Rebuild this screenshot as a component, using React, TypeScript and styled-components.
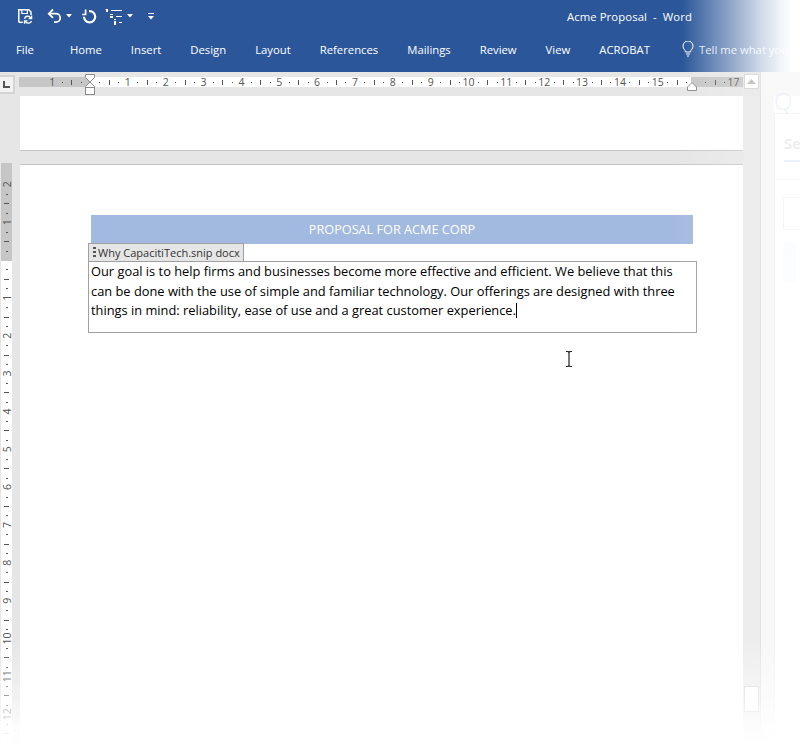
import React from "react";
import styled, { createGlobalStyle } from "styled-components";

const Global = createGlobalStyle`
  html, body { margin: 0; padding: 0; background: #fff; }
  body { font-family: "Open Sans", "Noto Sans", "Liberation Sans", sans-serif; }
  #root { width: 800px; height: 750px; overflow: hidden; }
`;

const Frame = styled.div`
  position: relative;
  width: 800px;
  height: 750px;
  overflow: hidden;
  display: flex;
  flex-direction: column;
`;
const Ribbon = styled.header`
  position: relative;
  background: #2b579a;
  color: #fff;
  height: 72px;
  flex: none;
  display: flex;
  flex-direction: column;
  &::after {
    content: "";
    position: absolute;
    inset: 0;
    background: linear-gradient(to right, rgba(255,255,255,0) 682px, rgba(255,255,255,0.37) 720px, rgba(255,255,255,0.57) 740px, rgba(255,255,255,0.77) 760px, rgba(255,255,255,0.93) 780px, #fff 792px);
  }
`;
const TitleRow = styled.div`
  height: 32px;
  display: flex;
  align-items: center;
  justify-content: space-between;
  padding: 0 108px 0 17px;
`;
const Qat = styled.div`
  display: flex;
  align-items: center;
`;
const QatIcon = styled.svg<{ $ml?: number }>`
  display: block;
  flex: none;
  margin-left: ${(p) => p.$ml ?? 0}px;
`;
const DocTitle = styled.div`
  font-size: 11.3px;
  white-space: pre;
  letter-spacing: 0.1px;
`;
const TabRow = styled.nav`
  height: 36px;
  display: flex;
  align-items: center;
  padding-left: 16px;
  font-size: 11.3px;
  white-space: nowrap;
  padding-bottom: 2px;
  box-sizing: border-box;
`;
const FileTab = styled.span`
  margin-right: 36px;
`;
const Tab = styled.span`
  margin-right: 29px;
`;
const TellMe = styled.span`
  display: flex;
  align-items: center;
  gap: 5px;
  margin-left: 3px;
  color: #dfe6f2;
`;
const RulerRow = styled.div`
  height: 24px;
  flex: none;
  background: #e6e6e6;
  display: flex;
  align-items: flex-start;
`;
const TabSelector = styled.div`
  flex: none;
  width: 13px;
  height: 15px;
  margin: 3px 4px 0 0;
  background: #f3f3f3;
  border: 2px solid #d4d4d4;
  border-left: none;
  display: flex;
  align-items: center;
  justify-content: center;
`;
const HRuler = styled.svg`
  flex: none;
  display: block;
`;
const ScrollUp = styled.div`
  flex: none;
  width: 15px;
  height: 15px;
  box-sizing: border-box;
  margin: 2px 0 0 1px;
  background: #fff;
  border: 1px solid #d2d2d2;
  display: flex;
  align-items: center;
  justify-content: center;
`;
const RulerEnd = styled.div`
  flex: 1;
  align-self: stretch;
  margin-left: 1px;
  background: #f7f7f7;
  border-left: 1px solid #dcdcdc;
`;
const Body = styled.div`
  flex: 1;
  min-height: 0;
  display: flex;
`;
const LeftGutter = styled.div`
  flex: none;
  width: 20px;
  background: #e6e6e6;
`;
const VRuler = styled.svg`
  display: block;
`;
const DocArea = styled.main`
  flex: none;
  width: 723px;
  display: flex;
  flex-direction: column;
`;
const PageTail = styled.div`
  height: 54px;
  flex: none;
  background: #fff;
`;
const PageGap = styled.div`
  height: 13px;
  flex: none;
  background: #e6e6e6;
  border-top: 1px solid #c6c6c6;
  border-bottom: 1px solid #c6c6c6;
`;
const Page = styled.section`
  flex: 1;
  background: #fff;
  padding: 50px 0 0 68px;
`;
const HeaderBand = styled.div`
  width: 602px;
  height: 29px;
  box-sizing: border-box;
  padding-bottom: 2px;
  margin-left: 3px;
  background: #a2b9e0;
  color: #fff;
  font-size: 12.7px;
  display: flex;
  align-items: center;
  justify-content: center;
`;
const ControlTag = styled.div`
  width: 154px;
  height: 17px;
  margin-top: -1px;
  background: #e6e6e6;
  border: 1px solid #a0a0a0;
  border-bottom: none;
  display: flex;
  align-items: center;
  font-size: 11px;
  color: #333;
  white-space: nowrap;
  overflow: hidden;
`;
const Grip = styled.svg`
  flex: none;
  margin: 0 1px 0 3px;
`;
const ControlBox = styled.div`
  width: 605px;
  height: 70px;
  border: 1px solid #a0a0a0;
  padding-left: 2px;
  font-size: 12.85px;
  line-height: 19.5px;
  color: #000;
`;
const Caret = styled.span`
  display: inline-block;
  width: 1px;
  height: 15px;
  background: #000;
  vertical-align: -3px;
`;
const Scrollbar = styled.aside`
  flex: none;
  width: 18px;
  background: #e9e9e9;
  border-right: 1px solid #dcdcdc;
  display: flex;
  flex-direction: column;
  justify-content: flex-end;
  padding-bottom: 38px;
  box-sizing: border-box;
`;
const Thumb = styled.div`
  width: 13px;
  height: 24px;
  margin-left: 1px;
  background: #fff;
  border: 1px solid #cfcfcf;
`;
const Spacer = styled.div`
  flex: none;
  width: 13px;
  background: #f6f6f6;
`;
const SidePane = styled.div`
  flex: 1;
  background: #fff;
  white-space: nowrap;
  display: flex;
  flex-direction: column;
`;
const PaneTitle = styled.div`
  font-size: 24px;
  font-weight: 300;
  color: #e6edf8;
  line-height: 9px;
  height: 17px;
`;
const PaneCard = styled.div`
  flex: 1;
  border-left: 1px solid #f0f0f0;
  border-top: 1px solid #f2f2f2;
`;
const PaneTab = styled.div`
  margin: 19px 0 0 9px;
  height: 29px;
  width: 16px;
  font-size: 15px;
  line-height: 20px;
  font-weight: 600;
  color: #e6e6e6;
  border-bottom: 2px solid #e2ebf7;
  box-sizing: border-box;
`;
const PaneRule = styled.div`
  height: 1px;
  margin-top: 17px;
  background: #f5f5f5;
`;
const PaneField = styled.div`
  margin: 17px 0 0 8px;
  height: 31px;
  border: 1px solid #f3f3f3;
  border-right: none;
`;
const PaneBlock = styled.div`
  margin: 12px 4px 0 8px;
  height: 40px;
  background: #fbfcfe;
`;
const Fade = styled.div`
  position: absolute;
  inset: 72px 0 0 0;
  pointer-events: none;
  background:
    linear-gradient(to right, rgba(255,255,255,0) 670px, rgba(255,255,255,0.18) 740px, rgba(255,255,255,0.25) 800px),
    linear-gradient(to bottom, rgba(255,255,255,0) 568px, rgba(255,255,255,0.5) 628px, rgba(255,255,255,0.9) 658px, #fff 673px);
`;
const IBeam = styled.svg`
  position: absolute;
  left: 565px;
  top: 351px;
`;

const U = 37.85;
const X0 = 71; // ruler-local x of zero (page x 90)

function TopRuler() {
  const marks: React.ReactNode[] = [];
  for (let n = -1; n <= 17; n++) {
    const x = X0 + n * U;
    if (n !== 0 && n !== 16) {
      marks.push(
        <text key={"t" + n} x={x} y={14} fontSize="10.5" textAnchor="middle" fill="#555" fontFamily="'Open Sans', sans-serif">
          {Math.abs(n)}
        </text>
      );
    }
    for (const q of [0.25, 0.5, 0.75]) {
      const px = x + q * U;
      if (px > 724 || px < 0) continue;
      marks.push(
        q === 0.5 ? (
          <rect key={`m${n}${q}`} x={Math.round(px)} y={8} width={1} height={5} fill="#555" />
        ) : (
          <rect key={`m${n}${q}`} x={Math.round(px)} y={10} width={1} height={1} fill="#555" />
        )
      );
    }
  }
  return (
    <HRuler width={724} height={24} viewBox="0 0 724 24">
      <rect x="0" y="5" width="724" height="10" fill="#c6c6c6" />
      <rect x={X0} y="5" width="601" height="10" fill="#fff" />
      {marks}
      <path d="M66.5 2.5h9v3l-4.5 4.5-4.5-4.5z" fill="#fff" stroke="#8a8a8a" />
      <path d="M66.5 15.5v-1l4.5-4.5 4.5 4.5v1z" fill="#fff" stroke="#8a8a8a" />
      <rect x="66.5" y="15.5" width="9" height="7" fill="#fff" stroke="#8a8a8a" />
      <path d="M668.5 18.5h9v-3.5l-4.5-4.5-4.5 4.5z" fill="#fff" stroke="#8a8a8a" />
    </HRuler>
  );
}

function SideRuler() {
  const marks: React.ReactNode[] = [];
  const Y0 = 260 - 96; // local y of zero
  for (let n = -2; n <= 12; n++) {
    const y = Y0 + n * U;
    if (n !== 0) {
      marks.push(
        <text key={"t" + n} x={0} y={0} fontSize="10.5" textAnchor="middle" fill="#555" fontFamily="'Open Sans', sans-serif"
          transform={`translate(10.5 ${y}) rotate(-90)`}>
          {Math.abs(n)}
        </text>
      );
    }
    for (const q of [0.25, 0.5, 0.75]) {
      const py = y + q * U;
      if (py < 67) continue;
      marks.push(
        q === 0.5 ? (
          <rect key={`m${n}${q}`} x={4} y={Math.round(py)} width={5} height={1} fill="#555" />
        ) : (
          <rect key={`m${n}${q}`} x={6} y={Math.round(py)} width={2} height={1} fill="#555" />
        )
      );
    }
  }
  return (
    <VRuler width={20} height={654} viewBox="0 0 20 654">
      <rect x="1" y="67" width="11" height="98" fill="#c6c6c6" />
      <rect x="1" y="165" width="11" height="489" fill="#fff" />
      {marks}
    </VRuler>
  );
}

export default function App() {
  return (
    <Frame>
      <Global />
      <Ribbon>
        <TitleRow>
          <Qat>
            <QatIcon width="16" height="16" viewBox="0 0 16 16" fill="none" stroke="#fff" strokeWidth="1.5">
              <path d="M1.8 14.3V1.8h10l2.2 2.2v3" />
              <path d="M1.8 14.3h4" />
              <path d="M4.8 2v3.5h5.5V2" strokeWidth="1.2" />
              <path d="M7.5 10.8a3.4 3.4 0 0 1 5.8-1.6l.9.9M14.6 7.5v3h-3" strokeWidth="1.3" />
              <path d="M14.5 13a3.4 3.4 0 0 1-5.7 1l-.9-.8M7.5 15.8v-3h3" strokeWidth="1.3" />
            </QatIcon>
            <QatIcon $ml={14} width="16" height="16" viewBox="0 0 16 16" fill="none" stroke="#fff" strokeWidth="1.8">
              <path d="M6 1.5 1.8 5.7 6 9.8" />
              <path d="M2 5.7h7a4.2 4.2 0 0 1 0 8.4H7" />
            </QatIcon>
            <QatIcon $ml={3} width="6" height="4" viewBox="0 0 6 4"><path d="M0 0h6L3 3.5z" fill="#fff" /></QatIcon>
            <QatIcon $ml={10} width="15" height="15" viewBox="0 0 15 15" fill="none" stroke="#fff" strokeWidth="2.2">
              <path d="M7 2.2h.6a5.6 5.6 0 1 1-5.6 5.6" />
              <path d="M3.6 0.5v5h-3.4" strokeWidth="1.7" />
            </QatIcon>
            <QatIcon $ml={8} width="17" height="17" viewBox="0 0 17 17" fill="#fff">
              <rect x="1" y="1" width="2" height="3" />
              <rect x="0.6" y="1" width="1" height="1" />
              <rect x="6" y="2" width="11" height="1" />
              <rect x="5" y="6" width="3" height="1" />
              <rect x="5" y="8" width="3" height="2" />
              <rect x="11" y="8" width="6" height="1" />
              <rect x="9" y="11" width="2" height="1" />
              <rect x="9" y="13" width="2" height="4" />
              <rect x="14" y="14" width="3" height="1" />
            </QatIcon>
            <QatIcon $ml={5} width="6" height="4" viewBox="0 0 6 4"><path d="M0 0h6L3 3.5z" fill="#fff" /></QatIcon>
            <QatIcon $ml={15} width="6" height="7" viewBox="0 0 6 7"><path d="M0 0h6v1H0zM0 3h6L3 6.5z" fill="#fff" /></QatIcon>
          </Qat>
          <DocTitle>{"Acme Proposal  -  Word"}</DocTitle>
        </TitleRow>
        <TabRow>
          <FileTab>File</FileTab>
          {["Home", "Insert", "Design", "Layout", "References", "Mailings", "Review", "View", "ACROBAT"].map((t) => (
            <Tab key={t}>{t}</Tab>
          ))}
          <TellMe>
            <svg width="12" height="16" viewBox="0 0 12 16" fill="none" stroke="#fff" strokeWidth="1">
              <path d="M3.5 11c0-2-2.5-3-2.5-6a5 5 0 0 1 10 0c0 3-2.5 4-2.5 6z" />
              <path d="M4 13h4M5 15h2" />
            </svg>
            Tell me what you
          </TellMe>
        </TabRow>
      </Ribbon>
      <RulerRow>
        <TabSelector>
          <svg width="7" height="7" viewBox="0 0 7 7"><path d="M0 0h2v5h5v2H0z" fill="#555" /></svg>
        </TabSelector>
        <TopRuler />
        <ScrollUp>
          <svg width="9" height="5" viewBox="0 0 9 5"><path d="M0 5 4.5 0 9 5z" fill="#b8b8b8" /></svg>
        </ScrollUp>
        <RulerEnd />
      </RulerRow>
      <Body>
        <LeftGutter>
          <SideRuler />
        </LeftGutter>
        <DocArea>
          <PageTail />
          <PageGap />
          <Page>
            <HeaderBand>PROPOSAL FOR ACME CORP</HeaderBand>
            <ControlTag>
              <Grip width="5" height="13" viewBox="0 0 5 13" fill="#555">
                <rect x="1" y="1" width="3" height="2" />
                <rect x="1" y="5" width="3" height="2" />
                <rect x="1" y="9" width="3" height="2" />
              </Grip>
              Why CapacitiTech.snip docx
            </ControlTag>
            <ControlBox>
              Our goal is to help firms and businesses become more effective and efficient. We believe that this can be done with the use of simple and familiar technology. Our offerings are designed with three things in mind: reliability, ease of use and a great customer experience.<Caret />
            </ControlBox>
          </Page>
        </DocArea>
        <Scrollbar>
          <Thumb />
        </Scrollbar>
        <Spacer />
        <SidePane>
          <PaneTitle>Q</PaneTitle>
          <PaneCard>
            <PaneTab>Se</PaneTab>
            <PaneRule />
            <PaneField />
            <PaneBlock />
          </PaneCard>
        </SidePane>
      </Body>
      <IBeam width="8" height="16" viewBox="0 0 8 16" fill="none" stroke="#222" strokeWidth="1.2">
        <path d="M1 .5h2l1 1 1-1h2M4 1.5v13M1 15.5h2l1-1 1 1h2" />
      </IBeam>
      <Fade />
    </Frame>
  );
}
